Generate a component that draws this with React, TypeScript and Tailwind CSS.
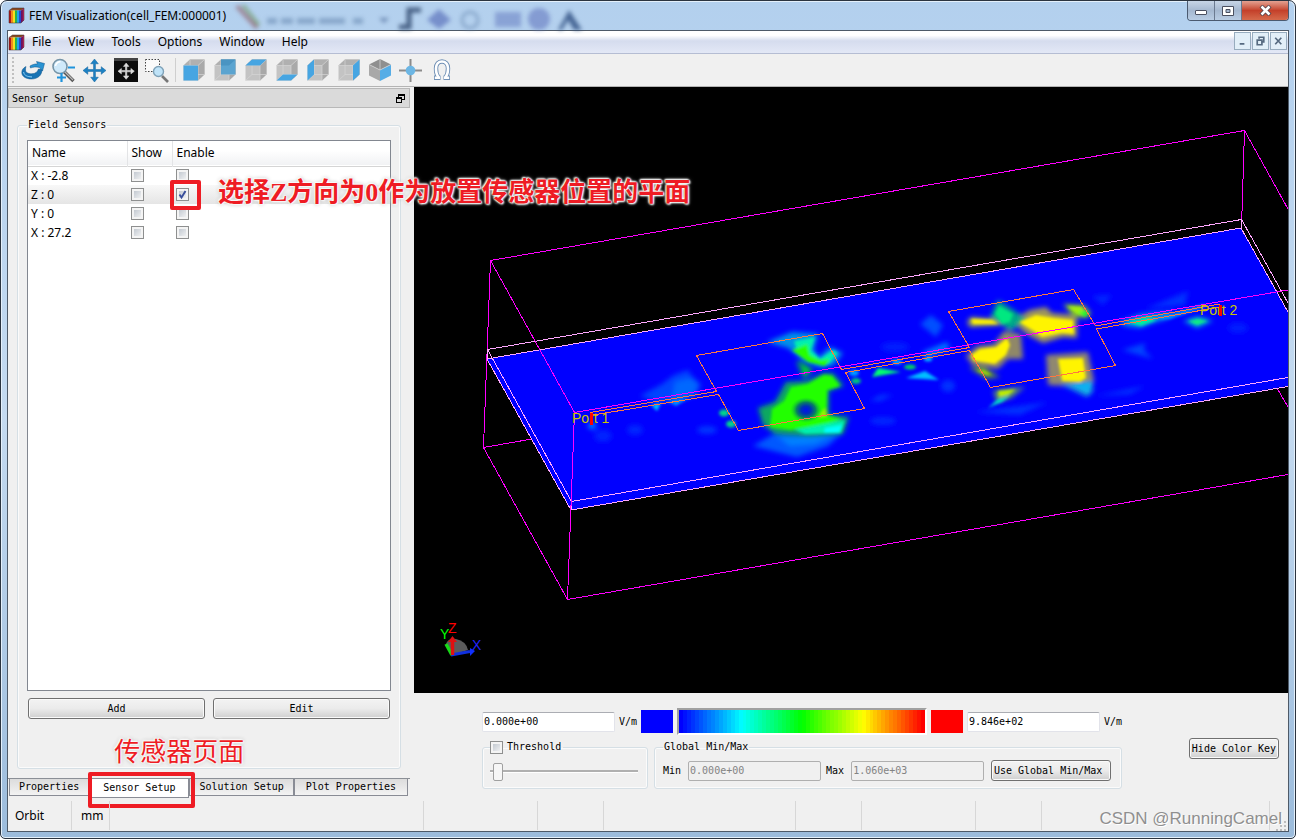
import { useState } from 'react';
import type { ReactNode } from 'react';

// ---------- Icons ----------

const AppIcon = () => (
  <svg width="17" height="17" viewBox="0 0 17 17" aria-hidden="true">
    <path d="M1 3.5L4.5 1H16L13 3.5z" fill="#8a4a20" />
    <path d="M1 3.5H3.2V16H1z" fill="#b01818" />
    <path d="M3 3.5H5V16H3z" fill="#f0891c" />
    <path d="M5 3.5H7V16H5z" fill="#f4e21c" />
    <path d="M7 3.5H9V16H7z" fill="#27b04a" />
    <path d="M9 3.5H11V16H9z" fill="#1ca6e8" />
    <path d="M11 3.5H13V16H11z" fill="#2747c9" />
    <path d="M13 3.5L16 1V13L13 16z" fill="#6a1260" />
    <path d="M14.8 2L16 1V13L14.8 14.2z" fill="#c4265a" />
    <path d="M1 3.5V16H13L16 13V1H4.5z" fill="none" stroke="#3a2a2a" strokeWidth=".5" />
  </svg>
);

const faces = {
  front: 'M0.5 6.5H15V21.5H0.5z',
  back: 'M7 0.5H21.5V15.5H7z',
  top: 'M0.5 6.5L7 0.5H21.5L15 6.5z',
  bottom: 'M0.5 21.5L7 15.5H21.5L15 21.5z',
  left: 'M0.5 6.5L7 0.5V15.5L0.5 21.5z',
  right: 'M15 6.5L21.5 0.5V15.5L15 21.5z',
};

const CubeIcon = ({ face }: { face: keyof typeof faces }) => (
  <svg width="22" height="22" viewBox="0 0 22 22" aria-hidden="true">
    <path d="M0.5 6.5L7 0.5H21.5V15.5L15 21.5H0.5z" fill="#c3c3c3" />
    <path d={faces.right} fill="#a9a9a9" />
    <path d={faces.top} fill="#b0b0b0" />
    <path d="M0.5 6.5H15V21.5M15 6.5L21.5 0.5M7 0.5V15.5H21.5M7 15.5L0.5 21.5" fill="none" stroke="#d6d6d6" strokeWidth=".7" />
    <path d={faces[face]} fill={face === 'back' ? '#5ba4d0' : '#46a5e2'} />
    {face === 'back' && <path d="M7 6.5L7 0.5H21.5L15 6.5z" fill="#4a94c2" />}
  </svg>
);

const IsoIcon = () => (
  <svg width="24" height="24" viewBox="0 0 24 24" aria-hidden="true">
    <path d="M12 1L23 6.500L12 12L1 6.500z" fill="#8f8f8f" />
    <path d="M1 6.500L12 12V23L1 17.500z" fill="#a8a8a8" />
    <path d="M23 6.500L12 12V23L23 17.500z" fill="#56ade6" />
    <path d="M12 1V12M1 6.500L12 12L23 6.500" fill="none" stroke="#d0d0d0" strokeWidth=".8" />
  </svg>
);

const RotateIcon = () => (
  <svg width="24" height="20" viewBox="0 0 24 20" aria-hidden="true">
    <path
      d="M5 6.500C2 8 .8 10 .8 12.500C.8 16.500 5 19 10.500 19C16.500 19 21 15.500 21 9.500L17.500 9C16.500 12 14.500 13.800 10.500 13.800C7 13.800 4.500 12.500 4.500 10C4.500 8.800 4.600 7.500 5 6.500z"
      fill="#1873b4" stroke="#0d5288" strokeWidth=".5" />
    <path d="M9 6C12 4.200 14.500 3.800 16.500 4L15.500 1.500L23.500 3.500L21.500 11L18.500 7.500C15.500 6.500 12 7 9.500 8z" fill="#2a93d2" stroke="#0d5288" strokeWidth=".5" />
    <path d="M2.500 12C3 15.500 7 17 11 16.800" fill="none" stroke="#7cc4ee" strokeWidth="1.200" />
  </svg>
);

const ZoomIcon = () => (
  <svg width="25" height="25" viewBox="0 0 25 25" aria-hidden="true">
    <path d="M13 13.500L22.500 23" stroke="#555" strokeWidth="3.400" />
    <path d="M13.500 13.500L22 22" stroke="#b9b9b9" strokeWidth="1.200" />
    <circle cx="9" cy="8.500" r="7" fill="#cfe9fa" stroke="#7795a8" strokeWidth="1.600" />
    <path d="M4.500 8a4.500 4.500 0 0 1 5-4.200" fill="none" stroke="#fff" strokeWidth="1.600" />
    <path d="M17 9.500h7M6 19.500h9M10.500 15v9" stroke="#1f93dc" strokeWidth="2.200" />
  </svg>
);

const moveArrows = 'M12 0L16 5H13V11H19V8L24 12L19 16V13H13V19H16L12 24L8 19H11V13H5V16L0 12L5 8V11H11V5H8z';

const PanIcon = () => (
  <svg width="23" height="23" viewBox="0 0 24 24" aria-hidden="true">
    <path d={moveArrows} fill="#1d82c4" stroke="#0f5f99" strokeWidth=".5" />
  </svg>
);

const FitIcon = () => (
  <svg width="24" height="24" viewBox="0 0 24 24" aria-hidden="true">
    <rect width="24" height="24" fill="#0c0c0c" />
    <rect width="24" height="3" fill="#444" />
    <g transform="translate(4 5) scale(.68)">
      <path d={moveArrows} fill="#dcdcdc" stroke="#dcdcdc" strokeWidth=".8" />
    </g>
  </svg>
);

const ZoomBoxIcon = () => (
  <svg width="25" height="25" viewBox="0 0 25 25" aria-hidden="true">
    <rect x="1.500" y="1.500" width="14" height="12" fill="#fafafa" stroke="#444" strokeDasharray="1.500 1.500" />
    <path d="M18 18L24 24" stroke="#777" strokeWidth="2.600" />
    <circle cx="14.500" cy="13.500" r="5" fill="#bfe3f8" stroke="#7fa2b8" strokeWidth="1.400" />
  </svg>
);

const CenterIcon = () => (
  <svg width="23" height="23" viewBox="0 0 23 23" aria-hidden="true">
    <path d="M11.500 0V23M0 11.500H23" stroke="#8b8b8b" strokeWidth="2" />
    <circle cx="11.500" cy="11.500" r="4.800" fill="#6cb6e4" />
  </svg>
);

const OmegaIcon = () => (
  <svg width="18" height="22" viewBox="0 0 18 22" aria-hidden="true">
    <path
      d="M5.500 18.500C3.500 16 3 12.500 3 9.500 3 5 5.500 2.500 9 2.500s6 2.500 6 7c0 3-.5 6.500-2.500 9"
      fill="none" stroke="#6f8fb5" strokeWidth="4.400" />
    <path d="M1 18.800H7.500M10.500 18.800H17" stroke="#6f8fb5" strokeWidth="4.400" />
    <path
      d="M5.800 18.500C3.500 16 3 12.500 3 9.500 3 5 5.500 2.500 9 2.500s6 2.500 6 7c0 3-.5 6.500-2.800 9"
      fill="none" stroke="#fff" strokeWidth="2.600" />
    <path d="M1.800 18.800H7M11 18.800H16.200" stroke="#fff" strokeWidth="2.600" />
  </svg>
);

const FloatIcon = () => (
  <svg width="9" height="9" viewBox="0 0 9 9" shapeRendering="crispEdges" aria-hidden="true">
    <path d="M2.500 3V0.500H8.500V5.500H6" fill="none" stroke="#000" />
    <path d="M0.500 3.500H5.500V8.500H0.500z" fill="none" stroke="#000" />
    <path d="M2 1.500H9M0 4.500H6" stroke="#000" />
  </svg>
);

// ---------- Small controls ----------

const CheckBox = ({ label, checked, onChange }: { label: string; checked: boolean; onChange: () => void }) => (
  <span className="inline-grid h-[13px] w-[13px] shrink-0 align-middle">
    <input
      type="checkbox"
      aria-label={label}
      checked={checked}
      onChange={onChange}
      className="col-start-1 row-start-1 h-[13px] w-[13px] appearance-none border border-[#8e8f8f] bg-linear-to-br from-[#b8bfc8] to-[#fbfbfb] shadow-[inset_0_0_0_2px_#f4f4f4]"
    />
    {checked && (
      <svg className="pointer-events-none col-start-1 row-start-1" width="13" height="13" viewBox="0 0 13 13" aria-hidden="true">
        <path d="M3.500 6.500L5.500 9.500L9.500 3" fill="none" stroke="#3a4f9c" strokeWidth="1.900" />
      </svg>
    )}
  </span>
);

const PushButton = ({ children, className }: { children: ReactNode; className: string }) => (
  <button
    type="button"
    className={`h-[21px] rounded-[3px] border border-[#707070] bg-linear-to-b from-[#f3f3f3] via-[#ebebeb] via-50% to-[#cfcfcf] shadow-[inset_0_0_0_1px_#fafafa] whitespace-nowrap ${className}`}
  >
    {children}
  </button>
);

const ValueInput = ({ id, value, disabled }: { id: string; value: string; disabled?: boolean }) => (
  <input
    id={id}
    aria-label={id}
    defaultValue={value}
    disabled={disabled}
    className="h-5 w-[133px] shrink-0 rounded-[2px] border border-[#e2e3ea] border-t-[#abadb3] bg-white px-px disabled:border-[#afafaf] disabled:bg-[#f0f0f0] disabled:text-[#838383]"
  />
);

// ---------- Field plot ----------

const FieldPlot = () => (
  <svg
    className="absolute inset-0 h-full w-full"
    viewBox="414 87 874 606"
    preserveAspectRatio="xMidYMid slice"
    role="img"
    aria-label="Field plot"
  >
    <defs>
      <filter id="soft" x="-30%" y="-30%" width="160%" height="160%">
        <feGaussianBlur stdDeviation="1.400" />
      </filter>
      <filter id="softer" x="-30%" y="-30%" width="160%" height="160%">
        <feGaussianBlur stdDeviation="2.600" />
      </filter>
      <radialGradient id="hole">
        <stop offset="0" stopColor="#0010f0" />
        <stop offset=".3" stopColor="#0030b8" />
        <stop offset=".6" stopColor="#088060" />
        <stop offset="1" stopColor="#14d820" stopOpacity="0" />
      </radialGradient>
    </defs>

    {/* far side of the bounding box */}
    <g fill="none" stroke="#f0f" shapeRendering="crispEdges">
      <path d="M483.500 447.500L532 439M1244.500 130.500L1241.500 228M1277 388L1288 407" />
      <path d="M490.500 260.500L1244.500 130.500L1288 209M483.500 447.500L567.500 599.500L1288 474.500" />
      <path d="M490.500 260.500L483.500 447.500" />
    </g>

    <path d="M487 359L1241 228L1288 312V386L571 510z" fill="#00f" />

    {/* weak field */}
    <g filter="url(#softer)" fill="#0048ff">
      <path d="M640 396L662 384L674 375L688 370L692 376L701 384L697 395L680 401L657 402z" fill="#0044ff" />
      <path d="M675 382L690 378L698 384L694 394L672 400z" fill="#0068ff" />
      <path d="M753 446L777 432L842 433L828 446L797 457z" fill="#0058ff" />
      <path d="M778 437L834 435L815 444L790 446z" fill="#0080ff" />
      <ellipse cx="603" cy="436" rx="9" ry="6" fill="#0020ff" />
      <ellipse cx="635" cy="430" rx="8" ry="5" fill="#0028ff" />
      <ellipse cx="707" cy="430" rx="10" ry="4" fill="#0034ff" />
      <ellipse cx="592" cy="426" rx="4" ry="3" fill="#0090ff" />
      <path d="M920 324L931 315L943 325L936 337z" fill="#0050ff" />
      <path d="M870 401L880 395L893 395L880 401z" fill="#0038ff" />
      <ellipse cx="883" cy="421" rx="13" ry="4" fill="#0028ff" />
      <ellipse cx="948" cy="386" rx="7" ry="6" fill="#0030ff" />
      <path d="M922 352L947 342L950 348L930 357z" fill="#0078ff" />
      <path d="M1122 350L1145 343L1144 350L1153 359z" fill="#0044ff" />
      <path d="M1092 296L1112 295L1103 305z" fill="#0028ff" />
      <path d="M1145 309L1188 291L1185 305z" fill="#0030ff" />
      <ellipse cx="1238" cy="328" rx="10" ry="5" fill="#001cff" />
      <path d="M975 412L1048 402L1020 415z" fill="#0030ff" />
      <path d="M1095 396L1145 386L1130 394z" fill="#0034ff" />
      <ellipse cx="895" cy="347" rx="14" ry="5" fill="#001cff" />
    </g>

    {/* falloff round the hot spots */}
    <g filter="url(#softer)">
      <path d="M767 342L792 332L818 334L814 350L819 357L830 347L843 353L834 365L820 368L803 360L788 348z" fill="#0090e8" />
      <path d="M796 361L802 361L814 369L805 380L800 372z" fill="#009070" />
      <path d="M786 382L807 381L823 373L833 373L844 386L829 391L829 415L849 417L843 434L808 436L775 434L763 425L758 408L775 402z" fill="#10a860" />
      <path d="M967 322L971 317L992 319L1003 325L970 327z" fill="#a0a850" />
      <path d="M1011 321L1030 310L1046 307L1052 313L1077 315L1077 338L1063 337L1043 343L1028 335z" fill="#a09858" />
      <path d="M990 318L998 300L1018 313L1028 320L1010 331L1000 323z" fill="#00a888" />
      <path d="M1063 304L1084 305L1091 313L1087 318L1074 317z" fill="#78b838" />
      <path d="M966 356L977 346L994 344L1004 331L1021 334L1023 359L1008 359L998 369L972 365z" fill="#908868" />
      <path d="M969 368L983 366L1000 377L987 379z" fill="#588840" />
      <path d="M1046 355L1088 352L1094 381L1087 387L1048 385z" fill="#908870" />
      <path d="M1060 384L1093 381L1093 392L1087 397z" fill="#1898e0" />
      <path d="M993 391L1025 387L1011 398L997 402z" fill="#609860" />
      <path d="M1119 322L1140 314L1175 311L1167 319L1153 323L1140 328L1125 326z" fill="#0090e8" />
      <path d="M1183 321L1198 316L1213 321L1197 328z" fill="#00a0d8" />
    </g>

    {/* hot spots */}
    <g filter="url(#soft)">
      <path d="M794 341L815 337L811 350L820 359L833 350L838 353L829 364L815 363L798 354z" fill="#00f0b0" />
      <path d="M792 350L807 344L810 355L820 360L830 359L825 366L808 362z" fill="#28ff00" />
      <path d="M802 365L810 370L804 375z" fill="#00c040" />

      <path d="M791 387L808 384L824 375L832 376L840 386L827 390L826 415L842 419L825 425L790 430L770 427L772 409L784 401z" fill="#20ff00" />
      <path d="M795 430L845 420L841 433L805 434z" fill="#00f0b0" />
      <path d="M825 428L843 425L839 433L824 433z" fill="#00ffff" />
      <path d="M818 417L827 416L826 408z" fill="#a0f000" />

      <ellipse cx="724" cy="413" rx="5" ry="3.500" fill="#00d888" />
      <ellipse cx="731" cy="424" rx="5" ry="3.500" fill="#00d888" />
      <path d="M651 405L661 403L657 411z" fill="#00c8ff" />
      <path d="M668 401L688 398L676 406z" fill="#0090ff" />
      <path d="M872 377L878 368L901 372z" fill="#00ff70" />
      <ellipse cx="910" cy="367" rx="6" ry="2.400" fill="#00d860" />
      <path d="M906 378L925 371L939 380z" fill="#00c0ff" />
      <ellipse cx="856" cy="381" rx="5" ry="3" fill="#00c878" />
      <ellipse cx="854" cy="373" rx="5" ry="3" fill="#00a0ff" />
      <ellipse cx="928" cy="359" rx="4" ry="2.500" fill="#00b8ff" />
      <ellipse cx="897" cy="362" rx="5" ry="2.500" fill="#00a8ff" />

      <path d="M971 319L992 320L999 324L973 324z" fill="#fff400" />
      <path d="M1019 322L1036 315L1054 318L1073 320L1074 334L1062 333L1042 337L1032 330z" fill="#fff400" />
      <path d="M995 314L999 306L1013 314L1010 322L1002 324z" fill="#00e880" />
      <path d="M1067 306L1082 307L1086 316L1077 314z" fill="#a0f010" />
      <path d="M1078 311L1089 312L1085 317z" fill="#10ff30" />

      <path d="M971 355L980 349L996 347L1007 338L1010 345L1006 355L995 364L974 361z" fill="#fff400" />
      <path d="M976 370L984 370L992 375L986 375z" fill="#a0e000" />
      <path d="M1058 359L1083 358L1086 378L1080 382L1062 381z" fill="#fff400" />
      <path d="M1072 385L1091 383L1088 393z" fill="#10b0f0" />
      <path d="M998 391L1016 389L1008 395L999 397z" fill="#c0f000" />
      <path d="M998 399L1010 396L1002 402L990 407L988 408z" fill="#00e0c8" />

      <path d="M1127 322L1148 317L1157 320L1141 326z" fill="#00f0a0" />
      <path d="M1155 319L1205 304L1205 307L1170 319z" fill="#0098ff" />
      <path d="M1188 321L1198 319L1208 321L1197 325z" fill="#10f080" />
    </g>
    <ellipse cx="806" cy="410" rx="16" ry="13" fill="url(#hole)" />

    {/* substrate outline */}
    <g fill="none" stroke="#ffa8ff" shapeRendering="crispEdges">
      <path d="M487.500 349.500L1241.500 219.500L1288 303M487.500 349.500L571.500 501.500L1288 377.500" />
      <path d="M487 359L1241 228L1288 312M487 359L571 510L1288 386.500" />
      <path d="M487.500 349.500V359M1241.500 220V228M571.500 501V510" />
    </g>

    {/* patches and feed lines */}
    <g fill="none" stroke="#ff7840" shapeRendering="crispEdges">
      <path d="M590 412.500L716.500 391.500L696.500 355.500L822.500 333.500L841.500 369.500L969.500 347.500L948.500 311.500L1073.500 289.500L1095.500 326L1220 304" />
      <path d="M590 415.500L718.500 394.500L738.500 430.500L864.500 408.500L845.500 372.500L969.500 350.500L990.500 387.500L1115.500 365.500L1096.500 329L1220 307" />
    </g>

    {/* near side of the bounding box */}
    <path
      d="M490.500 260.500L574.500 412.500L1288 290M574.500 412.500L567.500 599.500"
      fill="none" stroke="#f0f" shapeRendering="crispEdges" />

    <g fill="#c8c800" fontFamily='"Liberation Sans", sans-serif' fontSize="14">
      <text x="572" y="423">Port 1</text>
      <text x="1200" y="315">Port 2</text>
    </g>
    <path d="M590 413H593V425H590zM1219 305H1222V316H1219z" fill="#f00" />

    {/* axis triad */}
    <path d="M446 644Q448 638 456 639Q466 641 468 650L452 655z" fill="#5c5c5c" />
    <path d="M451 655L470 651.500" stroke="#1030e0" strokeWidth="3" />
    <path d="M470 648V656L475 651z" fill="#1030ff" />
    <path d="M452 655L446 644" stroke="#18d818" strokeWidth="3.500" />
    <path d="M452.500 655V640" stroke="#e01010" strokeWidth="3.500" />
    <path d="M448 642L452.500 636L457 642z" fill="#e01010" />
    <g fontFamily='"Liberation Sans", sans-serif' fontSize="14">
      <text x="440" y="639" fill="#0f0">Y</text>
      <text x="448" y="633" fill="#f00">Z</text>
      <text x="472" y="650" fill="#22f">X</text>
    </g>
  </svg>
);

// ---------- Bars ----------

const TitleBar = () => (
  <header className="relative flex h-[29px] shrink-0 items-center pl-[1px]">
    {/* what shows through the glass frame */}
    <svg className="absolute top-0 left-[228px] h-[29px] w-[360px] blur-[2px]" viewBox="0 0 360 29" aria-hidden="true">
      <path d="M2 5L22 27" stroke="#8a4a52" strokeWidth="4" opacity=".6" />
      <path d="M8 4L24 24" stroke="#6c9a60" strokeWidth="3" opacity=".7" />
      <path d="M32 20h10M46 20h12M62 20h18M84 20h26M118 20h10" stroke="#5c7fa8" strokeWidth="6" opacity=".5" />
      <path d="M144 17H154L149 22z" fill="#3c5a8c" opacity=".6" />
      <path d="M164 26H174V9H186" fill="none" stroke="#2c456c" strokeWidth="5" opacity=".8" />
      <path d="M204 8L216 19L204 28L192 19z" fill="#5c74bc" opacity=".7" />
      <circle cx="235" cy="19" r="8" fill="none" stroke="#6c8cb4" strokeWidth="3" opacity=".6" />
      <rect x="260" y="11" width="26" height="15" fill="#6c84c4" opacity=".6" />
      <circle cx="304" cy="18" r="11" fill="#6478c0" opacity=".6" />
      <path d="M323 29L334 9L347 29H339L333 19L327 29z" fill="#2c4c80" opacity=".8" />
    </svg>
    <AppIcon />
    <h1 className="relative pl-1 text-[12px] whitespace-nowrap">FEM Visualization(cell_FEM:000001)</h1>
    <div className="relative ml-auto flex h-5 self-start overflow-hidden rounded-b-[4px] border border-t-0 border-[#4b5a70]">
      <button type="button" aria-label="Minimize" className="grid w-[27px] place-items-center border-r border-[#6b7a90] bg-linear-to-b from-[#c7d5e6] via-[#a5b8d0] to-[#b9cde4]">
        <span className="mt-1 h-[5px] w-3 rounded-[1px] border border-[#4b5060] bg-white" />
      </button>
      <button type="button" aria-label="Maximize" className="grid w-[27px] place-items-center border-r border-[#6b7a90] bg-linear-to-b from-[#c7d5e6] via-[#a5b8d0] to-[#b9cde4]">
        <svg width="12" height="10" viewBox="0 0 12 10" aria-hidden="true">
          <path d="M0.500 0.500H11.500V9.500H0.500zM4 3.500V6.500H8V3.500z" fill="#fff" fillRule="evenodd" stroke="#4b5060" />
        </svg>
      </button>
      <button type="button" aria-label="Close" className="grid w-[46px] place-items-center bg-linear-to-b from-[#e3a191] via-[#c4402a] to-[#d56a4c]">
        <svg width="13" height="11" viewBox="0 0 13 11" aria-hidden="true">
          <path d="M2 1L11 10M11 1L2 10" stroke="#4d4049" strokeWidth="4.200" />
          <path d="M2.500 1.500L10.500 9.500M10.500 1.500L2.500 9.500" stroke="#fff" strokeWidth="2.600" />
        </svg>
      </button>
    </div>
  </header>
);

const menus = ['File', 'View', 'Tools', 'Options', 'Window', 'Help'];

const MenuBar = () => (
  <nav className="flex h-[23px] shrink-0 items-center border-b border-[#b5bdd3] bg-linear-to-b from-white from-20% via-[#d5dcee] via-45% to-[#e3e8f6]">
    <AppIcon />
    <div className="flex gap-px">
      {menus.map((name) => (
        <button key={name} type="button" className="px-2 first:pl-[7px]">
          {name}
        </button>
      ))}
    </div>
    <div className="ml-auto flex gap-px self-start pt-px pr-px">
      {[
        { label: 'Minimize view', d: 'M5 11.500H10' },
        { label: 'Restore view', d: 'M6.500 6V4.500H11.500V9.500H10M4.500 7.500H9.500V12.500H4.500z' },
        { label: 'Close view', d: 'M4.500 5L11 12M11 5L4.500 12' },
      ].map(({ label, d }) => (
        <button key={label} type="button" aria-label={label} className="h-[18px] w-[17px] border border-[#97acbe] bg-[#e2eff8]">
          <svg width="15" height="16" viewBox="0 0 16 17" aria-hidden="true">
            <path d={d} fill="none" stroke="#566a80" strokeWidth="1.800" />
          </svg>
        </button>
      ))}
    </div>
  </nav>
);

const ToolButton = ({ label, children }: { label: string; children: ReactNode }) => (
  <button type="button" aria-label={label} className="grid h-full w-[31px] place-items-center">
    {children}
  </button>
);

const ToolBar = () => (
  <div className="flex h-[33px] shrink-0 items-center border-b border-[#b4b4b4] bg-[#f0f0f0] pl-1">
    <span className="h-[26px] border-l-2 border-dotted border-[#c0c0c0]" />
    <div className="flex h-full pl-[3px]">
      <ToolButton label="Orbit"><RotateIcon /></ToolButton>
      <ToolButton label="Zoom"><ZoomIcon /></ToolButton>
      <ToolButton label="Pan"><PanIcon /></ToolButton>
      <ToolButton label="Fit"><FitIcon /></ToolButton>
      <ToolButton label="Zoom area"><ZoomBoxIcon /></ToolButton>
    </div>
    <span className="mr-[2px] ml-[3px] h-6 w-px bg-[#cfcfcf]" />
    {(['front', 'back', 'top', 'bottom', 'left', 'right'] as const).map((face) => (
      <ToolButton key={face} label={face}><CubeIcon face={face} /></ToolButton>
    ))}
    <ToolButton label="Isometric"><IsoIcon /></ToolButton>
    <ToolButton label="Center"><CenterIcon /></ToolButton>
    <ToolButton label="Impedance"><OmegaIcon /></ToolButton>
  </div>
);

// ---------- Sensor panel ----------

const initialSensors = [
  { name: 'X : -2.8', show: false, enable: false },
  { name: 'Z : 0', show: false, enable: true },
  { name: 'Y : 0', show: false, enable: false },
  { name: 'X : 27.2', show: false, enable: false },
];

const noteText =
  'absolute z-10 whitespace-nowrap text-[26px] leading-8 text-[#ee1c24] [font-family:"Liberation_Serif","Noto_Sans_CJK_SC",serif] [text-shadow:0_0_2px_#fff,0_0_2px_#fff,1px_1px_2px_#fff,-1px_-1px_2px_#fff,0_0_4px_#999]';

const SensorTable = () => {
  const [sensors, setSensors] = useState(initialSensors);

  const toggle = (index: number, key: 'show' | 'enable') =>
    setSensors(sensors.map((s, i) => (i === index ? { ...s, [key]: !s[key] } : s)));

  return (
    <div className="flex-1 border border-[#828790] bg-white">
      <table className="w-full table-fixed border-collapse text-left font-['Noto_Sans',sans-serif] text-[12px]">
        <thead>
          <tr className="h-[25px] border-b border-[#d5d5d5] bg-linear-to-b from-white from-40% to-[#f1f2f4]">
            <th className="w-[99px] border-r border-[#e3e4e6] pl-1 font-normal">Name</th>
            <th className="w-[45px] border-r border-[#e3e4e6] pl-1 font-normal">Show</th>
            <th className="pl-1 font-normal">Enable</th>
          </tr>
        </thead>
        <tbody>
          {sensors.map((sensor, i) => (
            <tr
              key={sensor.name}
              className={`h-[19px] leading-4 ${i === 1 ? 'bg-linear-to-b from-[#f8f8f8] to-[#e5e5e5]' : ''}`}
            >
              <td className="p-0 pl-[3px]">{sensor.name}</td>
              <td className="p-0 pl-1 leading-none">
                <CheckBox label={`Show ${sensor.name}`} checked={sensor.show} onChange={() => toggle(i, 'show')} />
              </td>
              <td className="relative p-0 pl-1 leading-none">
                <CheckBox label={`Enable ${sensor.name}`} checked={sensor.enable} onChange={() => toggle(i, 'enable')} />
                {i === 1 && (
                  <>
                    <span className="pointer-events-none absolute -top-[5px] -left-[2px] z-10 h-[30px] w-[31px] rounded-[2px] border-4 border-[#ee1c24]" />
                    <span className={`${noteText} -top-2 left-[46px] font-bold`}>
                      选择Z方向为0作为放置传感器位置的平面
                    </span>
                  </>
                )}
              </td>
            </tr>
          ))}
        </tbody>
      </table>
    </div>
  );
};

const tabs = ['Properties', 'Sensor Setup', 'Solution Setup', 'Plot Properties'];

const SidePanel = () => (
  <aside className="flex w-[402px] shrink-0 flex-col pt-px">
    <div className="flex h-5 shrink-0 items-center justify-between border border-[#b8b8b8] bg-[#dadada] pr-1 pl-[3px]">
      <h2>Sensor Setup</h2>
      <button type="button" aria-label="Float panel"><FloatIcon /></button>
    </div>

    <fieldset className="mt-[10px] mr-[9px] ml-[9px] flex flex-1 flex-col rounded-[3px] border border-[#d5dfe5] px-[9px] pb-[49px] shadow-[inset_0_0_0_1px_#fbfbfb]">
      <legend className="px-px leading-[14px]">Field Sensors</legend>
      <div className="flex flex-1 flex-col pt-2">
        <SensorTable />
        <div className="mt-[7px] flex gap-2 px-px">
          <PushButton className="flex-1">Add</PushButton>
          <PushButton className="flex-1">Edit</PushButton>
        </div>
      </div>
    </fieldset>

    <div className="relative mt-[9px] flex h-[22px] items-start border-t border-[#8b8f96] pl-px" role="tablist">
      {tabs.map((tab) =>
        tab === 'Sensor Setup' ? (
          <button
            key={tab}
            type="button"
            role="tab"
            aria-selected="true"
            className="relative h-[19px] border border-t-0 border-[#898c95] bg-white px-[13px] leading-[18px]"
          >
            {tab}
            <span className="pointer-events-none absolute -top-[7px] -left-[2px] h-9 w-[107px] rounded-[2px] border-4 border-[#ee1c24]" />
            <span className={`${noteText} -top-[42px] left-[24px]`}>传感器页面</span>
          </button>
        ) : (
          <button
            key={tab}
            type="button"
            role="tab"
            aria-selected="false"
            className="h-[17px] border border-t-0 border-[#898c95] bg-linear-to-b from-[#dcdcdc] to-[#f3f3f3] px-[9px] leading-4 last:px-[11px]"
          >
            {tab}
          </button>
        ),
      )}
    </div>
  </aside>
);

// ---------- Color key ----------

const stripes = Array.from({ length: 62 }, (_, i) => Math.round(240 * (1 - i / 61)));

const ColorKey = () => {
  const [threshold, setThreshold] = useState(false);

  return (
    <section className="flex shrink-0 items-center pr-[9px] pl-[68px]">
      <div className="flex flex-col gap-[5px] pt-[15px] pb-[11px]">
        <div className="flex h-[27px] items-center gap-1">
          <ValueInput id="Lower value" value="0.000e+00" />
          <label htmlFor="Lower value" className="w-[18px]">V/m</label>
          <span className="h-[23px] w-8 bg-[#00f]" />
          <span className="flex h-[27px] w-[250px] border-2 border-white border-t-[#a0a0a0] border-l-[#a0a0a0] shadow-[inset_-1px_-1px_0_#a0a0a0]">
            {stripes.map((hue, i) => (
              <span key={i} className="flex-1" style={{ background: `hsl(${hue} 100% 50%)` }} />
            ))}
          </span>
          <span className="h-[23px] w-8 bg-[#f00]" />
          <ValueInput id="Upper value" value="9.846e+02" />
          <label htmlFor="Upper value" className="w-[18px]">V/m</label>
        </div>

        <div className="flex gap-[6px]">
          <fieldset className="h-[49px] w-[166px] rounded-[3px] border border-[#d5dfe5] pr-[9px] pl-[7px] shadow-[inset_0_0_0_1px_#fbfbfb]">
            <legend className="flex h-[14px] items-center gap-1 pr-[2px] leading-[14px]">
              <CheckBox label="Threshold" checked={threshold} onChange={() => setThreshold(!threshold)} />
              Threshold
            </legend>
            <input
              type="range"
              aria-label="Threshold value"
              min={0}
              max={100}
              defaultValue={2}
              className="mt-[7px] h-5 w-full appearance-none bg-transparent [&::-webkit-slider-runnable-track]:h-[3px] [&::-webkit-slider-runnable-track]:border-t-2 [&::-webkit-slider-runnable-track]:border-b [&::-webkit-slider-runnable-track]:border-t-[#b0b0b0] [&::-webkit-slider-runnable-track]:border-b-white [&::-webkit-slider-thumb]:-mt-[9px] [&::-webkit-slider-thumb]:h-[18px] [&::-webkit-slider-thumb]:w-[10px] [&::-webkit-slider-thumb]:appearance-none [&::-webkit-slider-thumb]:rounded-[2px] [&::-webkit-slider-thumb]:border [&::-webkit-slider-thumb]:border-[#a0a0a0] [&::-webkit-slider-thumb]:bg-[#f6f6f6]"
            />
          </fieldset>

          <fieldset className="h-[49px] rounded-[3px] border border-[#d5dfe5] pr-[10px] pl-2 shadow-[inset_0_0_0_1px_#fbfbfb]">
            <legend className="px-px leading-[14px]">Global Min/Max</legend>
            <div className="flex items-center pt-[6px]">
              <label htmlFor="Global minimum" className="mr-[7px]">Min</label>
              <ValueInput id="Global minimum" value="0.000e+00" disabled />
              <label htmlFor="Global maximum" className="mr-[7px] ml-[5px]">Max</label>
              <ValueInput id="Global maximum" value="1.060e+03" disabled />
              <PushButton className="ml-[7px] w-[120px] pr-[6px]">Use Global Min/Max</PushButton>
            </div>
          </fieldset>
        </div>
      </div>
      <div className="ml-auto pt-1">
        <PushButton className="w-[90px]">Hide Color Key</PushButton>
      </div>
    </section>
  );
};

const StatusBar = () => (
  <footer className="relative flex h-[31px] shrink-0 items-stretch py-px font-['Noto_Sans',sans-serif] text-[12px]">
    <span className="flex w-16 items-center border-r border-[#d7d7d7] pl-[7px]">Orbit</span>
    <span className="flex w-[38px] items-center border-r border-[#d7d7d7] pl-[9px]">mm</span>
    <span className="w-[314px] border-r border-[#d7d7d7]" />
    <span className="w-[114px] border-r border-[#d7d7d7]" />
    <span className="w-[66px] border-r border-[#d7d7d7]" />
    <span className="w-[192px] border-r border-[#d7d7d7]" />
    <span className="w-[66px] border-r border-[#d7d7d7]" />
    <span className="w-[114px] border-r border-[#d7d7d7]" />
    <span className="w-[66px] border-r border-[#d7d7d7]" />
    <span className="flex-1 border-r border-[#d7d7d7]" />
    <span className="w-[18px]" />
    <svg className="absolute right-0 bottom-0" width="12" height="12" viewBox="0 0 12 12" aria-hidden="true">
      <path d="M8 2h2v2H8zM4 6h2v2H4zM8 6h2v2H8zM0 10h2v2H0zM4 10h2v2H4zM8 10h2v2H8z" fill="#bdbdbd" />
    </svg>
    <span className="absolute right-[6px] bottom-0 font-['Liberation_Sans',sans-serif] text-[17px] leading-6 whitespace-nowrap text-[#8f8f8f] [text-shadow:1px_1px_0_#fff]">
      CSDN @RunningCamel
    </span>
  </footer>
);

const App = () => (
  <div className="flex min-h-screen flex-col overflow-hidden rounded-t-[7px] rounded-b-[5px] border border-[#2b3440] bg-linear-to-b from-[#b3d0ee] via-[#c4daf0] to-[#9cbcdc] px-[6px] pb-[6px] font-['DejaVu_Sans_Mono',monospace] text-[10px] text-black shadow-[inset_0_0_0_1px_#e4f0fb]">
    <div className="font-['Noto_Sans',sans-serif] text-[12px]">
      <TitleBar />
    </div>
    <div className="flex flex-1 flex-col border border-[#4e5a68] bg-[#f0f0f0]">
      <div className="font-['Noto_Sans',sans-serif] text-[12px]">
        <MenuBar />
        <ToolBar />
      </div>
      <div className="flex flex-1">
        <SidePanel />
        <main className="ml-1 flex min-w-0 flex-1 flex-col">
          <div className="relative min-h-[400px] flex-1 overflow-hidden bg-black">
            <FieldPlot />
          </div>
          <ColorKey />
        </main>
      </div>
      <StatusBar />
    </div>
  </div>
);

export default App;
